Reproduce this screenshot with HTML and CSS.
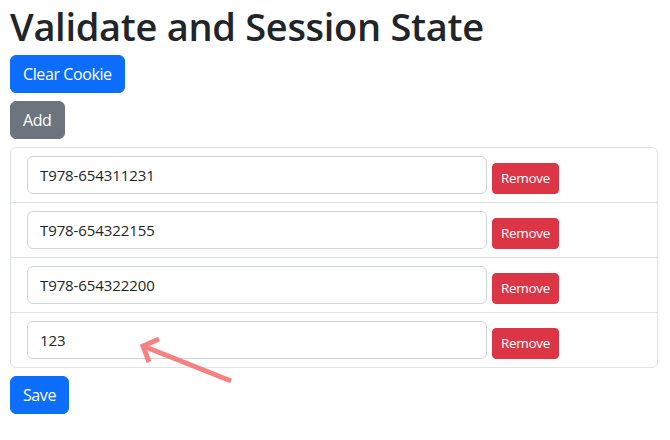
FILE: index.html
```html
<!DOCTYPE html>
<html lang="en">
<head>
<meta charset="utf-8">
<title>Validate and Session State</title>
<link rel="stylesheet" href="styles.css">
</head>
<body>
<div class="page">
  <h1 class="title">Validate and Session State</h1>
  <div class="actions">
    <button class="btn btn-primary">Clear Cookie</button>
    <button class="btn btn-secondary">Add</button>
  </div>
  <ul class="list">
    <li class="item"><input class="field" type="text" value="T978-654311231"><button class="btn btn-danger btn-sm">Remove</button></li>
    <li class="item"><input class="field" type="text" value="T978-654322155"><button class="btn btn-danger btn-sm">Remove</button></li>
    <li class="item"><input class="field" type="text" value="T978-654322200"><button class="btn btn-danger btn-sm">Remove</button></li>
    <li class="item"><input class="field" type="text" value="123"><button class="btn btn-danger btn-sm">Remove</button></li>
  </ul>
  <div class="actions">
    <button class="btn btn-primary">Save</button>
  </div>
</div>
<svg class="arrow" width="670" height="440" viewBox="0 0 670 440" aria-hidden="true">
  <g fill="none" stroke="#f57b7b" stroke-width="5" stroke-linecap="butt" stroke-linejoin="miter" opacity="0.95">
    <path d="M231 381 L143 346"/>
    <path d="M159 339 L143 346 L149 362"/>
  </g>
</svg>
</body>
</html>
```
FILE: styles.css
```css
* { box-sizing: border-box; }
html, body { margin: 0; padding: 0; }
body {
  font-family: "Open Sans", "Noto Sans", sans-serif;
  color: #212529;
  background: #fff;
  font-size: 16px;
  line-height: 1.5;
}
.page {
  padding: 0 12px 0 10px;
  display: flex;
  flex-direction: column;
  gap: 8px;
}
.title {
  margin: 0 0 -5px;
  font-size: 38px;
  font-weight: 600;
  line-height: normal;
  letter-spacing: -0.3px;
}
.actions {
  display: flex;
  flex-direction: column;
  align-items: flex-start;
  gap: 8px;
}
.btn {
  font-family: inherit;
  font-size: 16px;
  line-height: 24px;
  padding: 6px 12px;
  border: 1px solid transparent;
  border-radius: 6px;
  color: #fff;
  height: 38px;
  letter-spacing: -0.4px;
  cursor: pointer;
}
.btn-primary { background: #0d6efd; border-color: #0d6efd; }
.btn-secondary { background: #6c757d; border-color: #6c757d; }
.btn-danger { background: #dc3545; border-color: #dc3545; }
.btn-sm {
  font-size: 13.5px;
  line-height: 19px;
  height: 31px;
  padding: 5px 8px;
  border-radius: 4px;
  letter-spacing: -0.3px;
}
.list {
  list-style: none;
  margin: 0;
  padding: 0;
  border: 1px solid #dee2e6;
  border-radius: 6px;
}
.item {
  display: flex;
  align-items: flex-end;
  gap: 5px;
  padding: 8px 16px;
  height: 55px;
  border-top: 1px solid #dee2e6;
}
.item:first-child { border-top: 0; height: 54px; }
.field {
  width: 460px;
  height: 38px;
  padding: 6px 12px;
  font-family: inherit;
  font-size: 15px;
  letter-spacing: -0.1px;
  color: #212529;
  border: 1px solid #ced4da;
  border-radius: 6px;
  background: #fff;
}
.arrow {
  position: absolute;
  left: 0;
  top: 0;
  pointer-events: none;
}
```
